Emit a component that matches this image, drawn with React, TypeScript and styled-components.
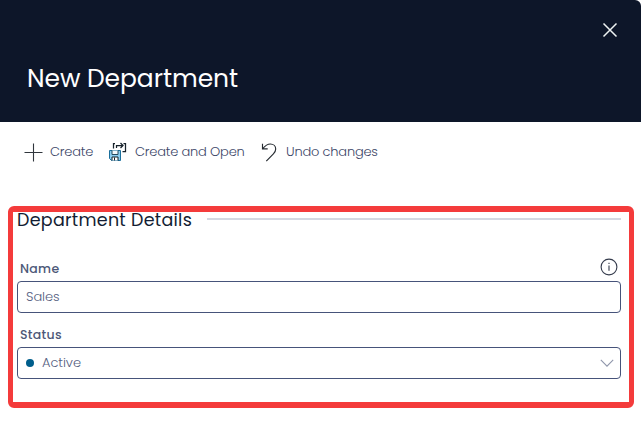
import React from "react";
import styled, { createGlobalStyle } from "styled-components";

const GlobalStyle = createGlobalStyle`
  * { box-sizing: border-box; }
  body {
    margin: 0;
    background: #fff;
    font-family: Poppins, Inter, "Open Sans", sans-serif;
    font-feature-settings: "cv11";
    overflow: hidden;
  }
`;

const Panel = styled.main`
  width: 641px;
  height: 428px;
  display: flex;
  flex-direction: column;
  background: #fff;
`;

const Header = styled.header`
  height: 122px;
  flex: none;
  display: flex;
  justify-content: space-between;
  align-items: flex-start;
  padding: 22px 23px 0 27px;
  background: #0d1629;
  border-top-right-radius: 6px;
`;

const Title = styled.h1`
  margin: 37px 0 0;
  font-size: 25px;
  line-height: 40px;
  font-weight: 400;
  letter-spacing: -0.07px;
  white-space: nowrap;
  color: #fff;
`;

const PlainButton = styled.button`
  padding: 0;
  border: 0;
  background: none;
  display: flex;
  font: inherit;
  color: inherit;
`;

const Toolbar = styled.nav`
  height: 60px;
  flex: none;
  display: flex;
  align-items: center;
  padding-left: 24px;
`;

const Action = styled(PlainButton)<{ $width: number; $gap: number }>`
  width: ${(p) => p.$width}px;
  gap: ${(p) => p.$gap}px;
  align-items: center;
  font-size: 13px;
  line-height: 20px;
  font-weight: 300;
  letter-spacing: -0.2px;
  white-space: nowrap;
  color: #3d4768;

  svg { flex: none; }
`;

const Details = styled.section`
  width: 626px;
  height: 202px;
  margin: 24px 0 0 8px;
  padding: 0 8px 0 4px;
  border: solid #f43b3b;
  border-width: 6px 5px;
  border-radius: 6px;
`;

const SectionHeading = styled.div`
  height: 14px;
  display: flex;
  align-items: center;
  gap: 15px;
`;

const Heading = styled.h2`
  width: 175px;
  margin: 2px 0 0;
  font-size: 17.5px;
  line-height: 24px;
  font-weight: 400;
  letter-spacing: 0.28px;
  white-space: nowrap;
  color: #131d33;
`;

const Rule = styled.div`
  flex: 1;
  height: 2px;
  background: #d5d8e1;
`;

const Field = styled.div<{ $top: number }>`
  margin-top: ${(p) => p.$top}px;
`;

const LabelRow = styled.div`
  height: 20px;
  display: flex;
  align-items: center;
  justify-content: space-between;
  padding: 0 3px;
  margin-bottom: 4px;
`;

const Label = styled.label`
  padding-top: 4px;
  font-size: 12.5px;
  line-height: 20px;
  font-weight: 500;
  letter-spacing: 0.3px;
  color: #4d5878;
`;

const Control = styled.div`
  width: 604px;
  height: 32px;
  display: flex;
  align-items: center;
  padding: 0 6px 0 8px;
  border: 1px solid #46537a;
  border-radius: 4px;
  font-size: 13px;
  font-weight: 300;
  line-height: 20px;
  color: #56607f;
`;

const Value = styled.span`
  flex: 1;
  letter-spacing: -0.05px;
`;

const Dot = styled.span`
  width: 8px;
  height: 8px;
  margin-right: 8px;
  border-radius: 50%;
  background: #005e8c;
`;

const CloseIcon = () => (
  <svg width="16" height="16" viewBox="0 0 16 16" fill="none" stroke="#eef3f3" strokeWidth="1.5">
    <path d="M1.5 1.5 14.5 14.5M14.5 1.5 1.5 14.5" />
  </svg>
);

const PlusIcon = () => (
  <svg width="19" height="19" viewBox="0 0 19 19" fill="none" stroke="#30363d" strokeWidth="1.1">
    <path d="M9.5 .5v18M.5 9.5h18" />
  </svg>
);

const SaveOpenIcon = () => (
  <svg width="18" height="20" viewBox="0 0 18 20" fill="none">
    <path d="M.5 8.5h11v10h-9l-2-2z" fill="#8bcdf0" stroke="#1a6f9c" />
    <path d="M3 8.5v4h6v-4" fill="#f3f8fb" stroke="#24485d" />
    <path d="M3 18.5v-3.5h6v3.5M5.5 15.5v3" fill="#fff" stroke="#17222b" />
    <path d="M6 1.5H4.5v5M14.5 1.5h2v8h-3M7.5 6V3.5H14M11.5 1 14 3.5 11.5 6" stroke="#17222b" strokeWidth="1.25" />
  </svg>
);

const UndoIcon = () => (
  <svg width="16" height="19" viewBox="0 0 16 19" fill="none" stroke="#252a30" strokeWidth="1.15">
    <path d="M1.5 .8v5h5.2M1.8 5.5C4.3 2.5 6.8 1 9.3 1c3.1 0 5.4 2 5.4 5 0 2-1 3.5-2.3 4.8L5.3 18.2" />
  </svg>
);

const InfoIcon = () => (
  <svg width="18" height="18" viewBox="0 0 18 18" fill="none" stroke="#343b4c" strokeWidth="1.1">
    <circle cx="9" cy="9" r="7.9" />
    <path d="M9 7.5v5.2M9 4.8v1.3" />
  </svg>
);

const ChevronIcon = () => (
  <svg width="14" height="8" viewBox="0 0 14 8" fill="none" stroke="#8f96ab" strokeWidth="1.1">
    <path d="m.8 .9 6.2 6.2L13.2 .9" />
  </svg>
);

export default function App() {
  return (
    <>
      <GlobalStyle />
      <Panel>
        <Header>
          <Title>New Department</Title>
          <PlainButton aria-label="Close"><CloseIcon /></PlainButton>
        </Header>
        <Toolbar>
          <Action $width={85} $gap={7}><PlusIcon />Create</Action>
          <Action $width={152} $gap={8}><SaveOpenIcon />Create and Open</Action>
          <Action $width={120} $gap={9}><UndoIcon />Undo changes</Action>
        </Toolbar>
        <Details>
          <SectionHeading>
            <Heading>Department Details</Heading>
            <Rule />
          </SectionHeading>
          <Field $top={31}>
            <LabelRow>
              <Label>Name</Label>
              <InfoIcon />
            </LabelRow>
            <Control><Value>Sales</Value></Control>
          </Field>
          <Field $top={10}>
            <LabelRow><Label>Status</Label></LabelRow>
            <Control>
              <Dot />
              <Value>Active</Value>
              <ChevronIcon />
            </Control>
          </Field>
        </Details>
      </Panel>
    </>
  );
}
